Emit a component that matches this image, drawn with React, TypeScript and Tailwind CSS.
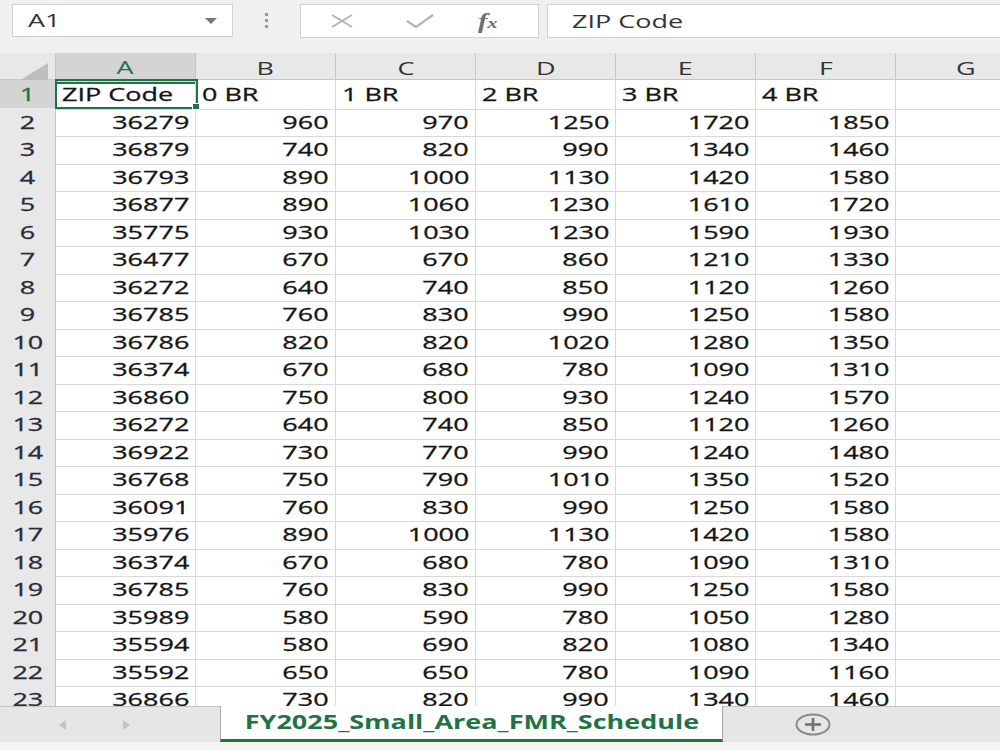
import { ChevronDown } from 'lucide-react';

const cols = ['A', 'B', 'C', 'D', 'E', 'F', 'G'];

const header = ['ZIP Code', '0 BR', '1 BR', '2 BR', '3 BR', '4 BR'];

const rows: number[][] = [
  [36279, 960, 970, 1250, 1720, 1850],
  [36879, 740, 820, 990, 1340, 1460],
  [36793, 890, 1000, 1130, 1420, 1580],
  [36877, 890, 1060, 1230, 1610, 1720],
  [35775, 930, 1030, 1230, 1590, 1930],
  [36477, 670, 670, 860, 1210, 1330],
  [36272, 640, 740, 850, 1120, 1260],
  [36785, 760, 830, 990, 1250, 1580],
  [36786, 820, 820, 1020, 1280, 1350],
  [36374, 670, 680, 780, 1090, 1310],
  [36860, 750, 800, 930, 1240, 1570],
  [36272, 640, 740, 850, 1120, 1260],
  [36922, 730, 770, 990, 1240, 1480],
  [36768, 750, 790, 1010, 1350, 1520],
  [36091, 760, 830, 990, 1250, 1580],
  [35976, 890, 1000, 1130, 1420, 1580],
  [36374, 670, 680, 780, 1090, 1310],
  [36785, 760, 830, 990, 1250, 1580],
  [35989, 580, 590, 780, 1050, 1280],
  [35594, 580, 690, 820, 1080, 1340],
  [35592, 650, 650, 780, 1090, 1160],
  [36866, 730, 820, 990, 1340, 1460],
];

// the screenshot is stretched sideways, so text is widened with scale-x
function Wide({ children, align = 'left' }: { children: React.ReactNode; align?: 'left' | 'right' | 'center' }) {
  const origin = align === 'right' ? 'origin-right' : align === 'center' ? 'origin-center' : 'origin-left';
  return <span className={`inline-block scale-x-[1.42] whitespace-nowrap ${origin}`}>{children}</span>;
}

function FormulaBar() {
  return (
    <div className="h-[53px] bg-[#f0f0f0] flex items-start pt-[4px] text-[19px] text-[#333]">
      <div className="ml-[12px] w-[221px] h-[33px] bg-white border border-[#d0d0d0] flex items-center justify-between pl-[15px] pr-[14px]">
        <Wide>A1</Wide>
        <svg width="14" height="8" viewBox="0 0 14 8">
          <path d="M1 1 L13 1 L7 7 Z" fill="#777" />
        </svg>
      </div>
      <div className="w-[67px] h-[33px] flex flex-col items-center justify-center gap-[3px]">
        <span className="w-[3px] h-[3px] bg-[#9a9a9a]" />
        <span className="w-[3px] h-[3px] bg-[#9a9a9a]" />
        <span className="w-[3px] h-[3px] bg-[#9a9a9a]" />
      </div>
      <div className="w-[239px] h-[34px] bg-white border border-[#d0d0d0] flex items-center">
        <svg className="ml-[28px]" width="26" height="14" viewBox="0 0 26 14">
          <path d="M3 1 L23 13 M23 1 L3 13" stroke="#b4b4b4" strokeWidth="2" fill="none" />
        </svg>
        <svg className="ml-[50px]" width="30" height="16" viewBox="0 0 30 16">
          <path d="M2 8 L11 14 L28 2" stroke="#b4b4b4" strokeWidth="2.2" fill="none" />
        </svg>
        <span className="ml-[43px] font-['Liberation_Serif'] italic font-bold text-[#6e6e6e] text-[20px] leading-none">
          <Wide align="left">
            f<span className="text-[14px]">x</span>
          </Wide>
        </span>
      </div>
      <div className="ml-[8px] flex-1 h-[34px] bg-white border border-[#d0d0d0] border-r-0 flex items-center pl-[24px]">
        <Wide>ZIP Code</Wide>
      </div>
    </div>
  );
}

function HeaderRow() {
  return (
    <div className="grid grid-cols-[56px_repeat(7,140px)] h-[27px] bg-[#e8e8e8] border-b border-[#c6c6c6] text-[19px] text-[#333]">
      <div className="border-r border-[#c6c6c6] flex items-end justify-end pr-[6px] pb-[3px]">
        <svg width="30" height="18" viewBox="0 0 30 18">
          <path d="M29 0 L29 18 L0 18 Z" fill="#bdbdbd" />
        </svg>
      </div>
      {cols.map((c) => (
        <div
          key={c}
          className={`border-r border-[#c6c6c6] flex items-center justify-center ${
            c === 'A' ? 'bg-[#d4d4d4] text-[#217346] border-b-2 border-b-[#217346]' : ''
          }`}
        >
          <Wide align="center">{c}</Wide>
        </div>
      ))}
    </div>
  );
}

function RowHead({ n }: { n: number }) {
  return (
    <div
      className={`border-r border-b border-[#c6c6c6] flex items-center justify-center ${
        n === 1 ? 'bg-[#d4d4d4] text-[#217346]' : 'bg-[#e8e8e8] text-[#2a2a3a]'
      }`}
    >
      <Wide align="center">{n}</Wide>
    </div>
  );
}

function Grid() {
  return (
    <div className="flex-1 overflow-hidden relative bg-white">
      <HeaderRow />
      <div className="grid grid-cols-[56px_repeat(7,140px)] h-[27.5px] text-[19px] text-[#151515] [-webkit-text-stroke:0.3px]">
        <RowHead n={1} />
        {header.map((h) => (
          <div key={h} className="border-r border-b border-[#d8d8d8] flex items-center pl-[6px]">
            <Wide>{h}</Wide>
          </div>
        ))}
        <div className="border-r border-b border-[#d8d8d8]" />
      </div>
      {rows.map((r, i) => (
        <div key={i} className="grid grid-cols-[56px_repeat(7,140px)] h-[27.5px] text-[19px] text-[#151515] [-webkit-text-stroke:0.3px]">
          <RowHead n={i + 2} />
          {r.map((v, j) => (
            <div key={j} className="border-r border-b border-[#d8d8d8] flex items-center justify-end pr-[6px]">
              <Wide align="right">{v}</Wide>
            </div>
          ))}
          <div className="border-r border-b border-[#d8d8d8]" />
        </div>
      ))}
      {/* active cell A1 */}
      <div className="absolute left-[55px] top-[26px] w-[143px] h-[29.5px] border-2 border-[#217346] pointer-events-none" />
      <div className="absolute left-[192px] top-[50px] w-[8px] h-[7px] bg-[#217346] border border-white" />
    </div>
  );
}

function SheetTabs() {
  return (
    <div className="h-[44px] flex flex-col">
      <div className="h-[36px] bg-[#e6e6e6] flex">
        <div className="w-[220px] border-t border-[#c6c6c6] flex items-center">
          <svg className="ml-[59px]" width="8" height="10" viewBox="0 0 8 10">
            <path d="M7 0 L7 10 L0 5 Z" fill="#c4c4c4" />
          </svg>
          <svg className="ml-[55px]" width="8" height="10" viewBox="0 0 8 10">
            <path d="M1 0 L1 10 L8 5 Z" fill="#c4c4c4" />
          </svg>
        </div>
        <div className="w-[503px] bg-white border-x border-[#a8a8a8] border-b-[3px] border-b-[#217346] flex items-center justify-center text-[19px] font-bold text-[#217346]">
          <Wide align="center">FY2025_Small_Area_FMR_Schedule</Wide>
        </div>
        <div className="flex-1 border-t border-[#c6c6c6] flex items-center">
          <svg className="ml-[72px]" width="36" height="23" viewBox="0 0 36 23">
            <ellipse cx="18" cy="11.5" rx="16.5" ry="10" stroke="#8a8a8a" strokeWidth="2" fill="none" />
            <path d="M18 5 L18 18 M10 11.5 L26 11.5" stroke="#707070" strokeWidth="2.6" />
          </svg>
        </div>
      </div>
      <div className="flex-1 bg-[#f4f4f4]" />
    </div>
  );
}

export default function App() {
  return (
    <div className="w-[1000px] h-[750px] overflow-hidden flex flex-col bg-white font-['Open_Sans',sans-serif]">
      <FormulaBar />
      <Grid />
      <SheetTabs />
    </div>
  );
}
